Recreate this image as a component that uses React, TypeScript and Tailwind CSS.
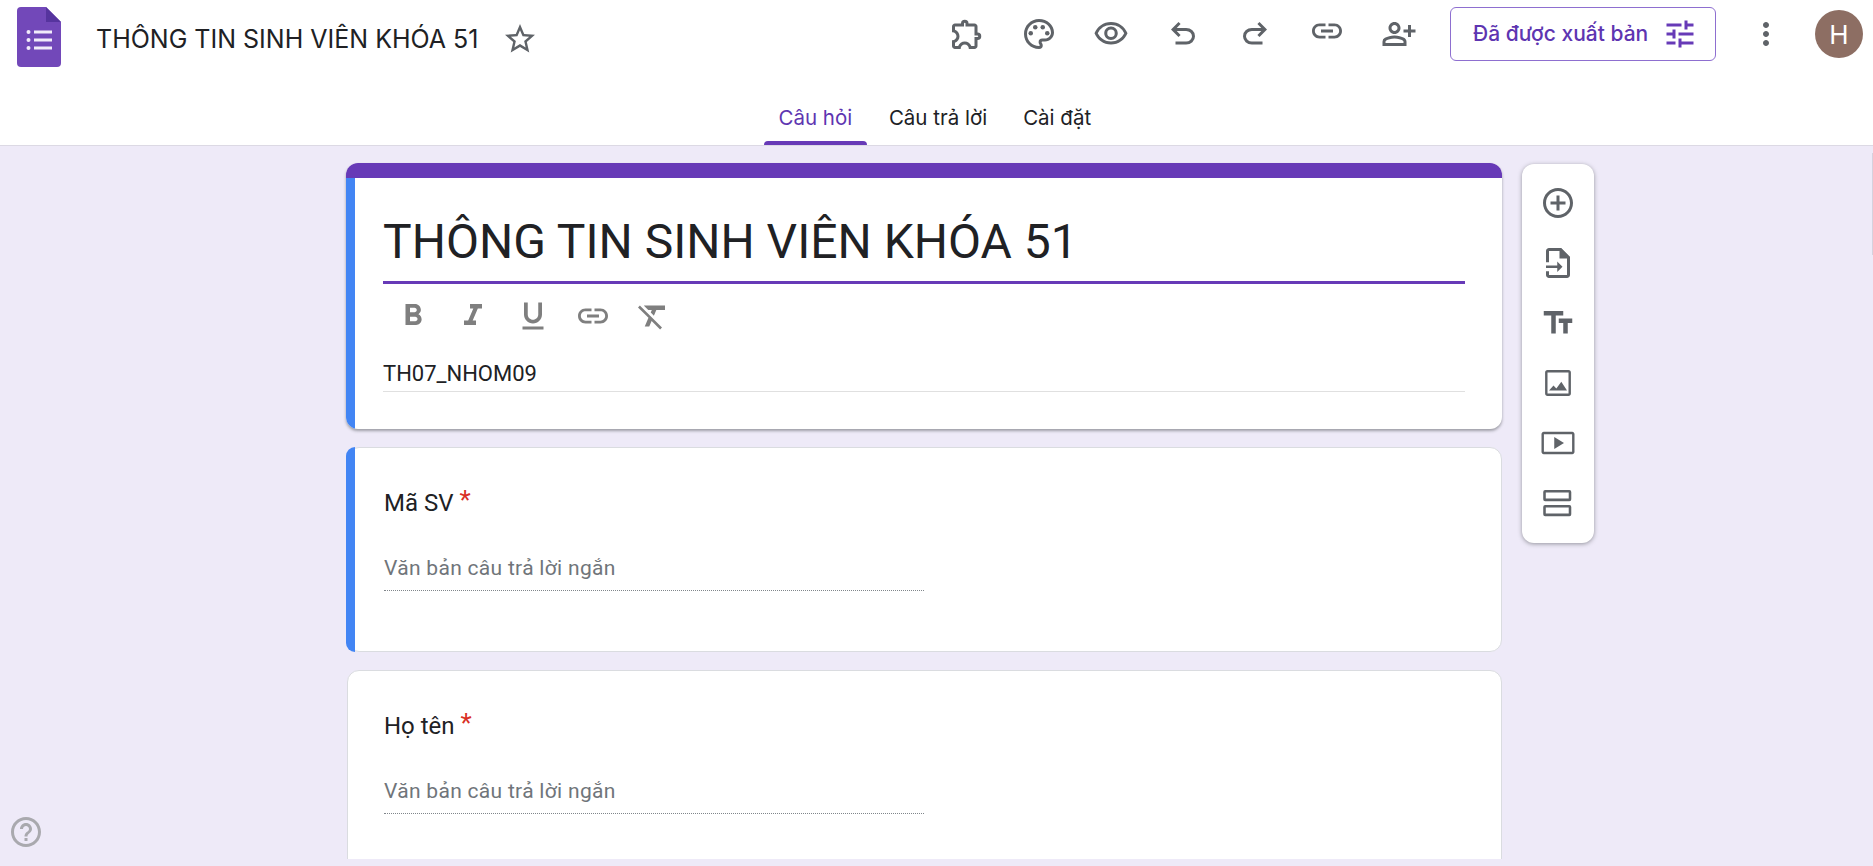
import {
  MdAddCircleOutline,
  MdFormatBold,
  MdFormatClear,
  MdFormatItalic,
  MdFormatUnderlined,
  MdHelpOutline,
  MdLink,
  MdMoreVert,
  MdOutlineExtension,
  MdOutlinePalette,
  MdOutlinePersonAddAlt,
  MdOutlineVisibility,
  MdStarBorder,
  MdTextFields,
  MdTune,
} from "react-icons/md";

function FormsLogo() {
  return (
    <svg width="44" height="60" viewBox="0 0 44 60" className="mt-1.5 shrink-0">
      <path d="M4 0H29L44 15V56a4 4 0 0 1-4 4H4a4 4 0 0 1-4-4V4a4 4 0 0 1 4-4z" fill="#7248b9" />
      <path d="M29 0L44 15H29z" fill="#56349e" />
      <g fill="#f1ebfa">
        <circle cx="11.500" cy="25" r="2" />
        <circle cx="11.500" cy="33" r="2" />
        <circle cx="11.500" cy="41" r="2" />
        <rect x="17" y="23.500" width="18" height="3" />
        <rect x="17" y="31.500" width="18" height="3" />
        <rect x="17" y="39.500" width="18" height="3" />
      </g>
    </svg>
  );
}

function UndoIcon() {
  return (
    <svg width="36" height="36" viewBox="0 -960 960 960" fill="currentColor">
      <path d="M280-200v-80h284q63 0 109.500-40T720-420q0-60-46.500-100T564-560H312l104 104-56 56-200-200 200-200 56 56-104 104h252q97 0 166.500 63T800-420q0 94-69.500 157T564-200H280Z" />
    </svg>
  );
}

function RedoIcon() {
  return (
    <svg width="36" height="36" viewBox="0 -960 960 960" fill="currentColor">
      <path d="M396-200q-97 0-166.500-63T160-420q0-94 69.500-157T396-640h252L544-744l56-56 200 200-200 200-56-56 104-104H396q-63 0-109.500 40T240-420q0 60 46.500 100T396-280h284v80H396Z" />
    </svg>
  );
}

function ImportIcon() {
  return (
    <svg width="36" height="36" viewBox="0 0 24 24" fill="currentColor">
      <path d="M14 2H6c-1.100 0-2 .9-2 2v7.500h2V4h7v5h5v11H6v-2.500H4V20c0 1.100.9 2 2 2h12c1.100 0 2-.9 2-2V8l-6-6z" />
      <path d="M14 2l6 6h-6z" />
      <path d="M11.500 11l3.500 3.500-3.500 3.500v-2.700H4v-1.600h7.500z" />
    </svg>
  );
}

function ImageIcon() {
  return (
    <svg width="36" height="36" viewBox="0 0 24 24" fill="currentColor">
      <path d="M19 5v14H5V5h14m0-1.600H5C4 3.400 3.400 4 3.400 5v14c0 1 .6 1.600 1.600 1.600h14c1 0 1.600-.6 1.600-1.600V5c0-1-.6-1.600-1.600-1.600z" />
      <path d="M6 17l3-3.400 1.900 2 3.300-4.400L18 17z" />
    </svg>
  );
}

function VideoIcon() {
  return (
    <svg width="36" height="36" viewBox="0 0 24 24" fill="currentColor">
      <path d="M21.500 4.500h-19c-.8 0-1.500.7-1.500 1.500v12c0 .8.7 1.500 1.500 1.500h19c.8 0 1.500-.7 1.500-1.500V6c0-.8-.7-1.500-1.500-1.500zm-.1 13.400H2.600V6.100h18.800v11.800z" />
      <path d="M9.500 8v8l6.500-4z" />
    </svg>
  );
}

function SectionIcon() {
  return (
    <svg width="36" height="36" viewBox="0 0 24 24" fill="none" stroke="currentColor" strokeWidth="1.700">
      <rect x="3" y="4.200" width="17" height="5.700" rx="0.400" />
      <rect x="3" y="14.200" width="17" height="5.700" rx="0.400" />
    </svg>
  );
}

function QuestionCard({ label, active }: { label: string; active?: boolean }) {
  return (
    <div className="relative h-[205px] shrink-0 rounded-xl border border-[#dadce0] bg-white pl-9 pt-[33px]">
      {active && <div className="absolute -bottom-px -left-0.5 -top-px w-[9px] rounded-l-xl bg-[#4285f4]" />}
      <div className="flex h-11 items-center text-[24px] text-[#202124]">
        {label}
        <span className="ml-1.5 -mt-1.5 text-[26px] text-[#d93025]">*</span>
      </div>
      <div className="mt-7 flex h-[31px] w-[540px] items-center text-[21px] tracking-[0.3px] text-[#70757a]">
        Văn bản câu trả lời ngắn
      </div>
      <div className="mt-1.5 w-[540px] border-b border-dotted border-[#80868b]" />
    </div>
  );
}

export default function App() {
  const sideTools = [
    <MdAddCircleOutline key="add" size={36} />,
    <ImportIcon key="import" />,
    <MdTextFields key="text" size={36} />,
    <ImageIcon key="image" />,
    <VideoIcon key="video" />,
    <SectionIcon key="section" />,
  ];
  const topTools = [
    <MdOutlineExtension key="ext" />,
    <MdOutlinePalette key="palette" />,
    <MdOutlineVisibility key="eye" />,
    <UndoIcon key="undo" />,
    <RedoIcon key="redo" />,
    <MdLink key="link" className="-mt-1.5" />,
    <MdOutlinePersonAddAlt key="person" />,
  ];
  const editTools = [
    <MdFormatBold key="b" />,
    <MdFormatItalic key="i" />,
    <MdFormatUnderlined key="u" />,
    <MdLink key="l" />,
    <MdFormatClear key="c" />,
  ];

  return (
    <div className="relative flex h-screen flex-col overflow-hidden bg-[#eeeaf8] font-['Roboto',sans-serif]">
      <header className="h-[146px] shrink-0 border-b border-[#dcd9e4] bg-white">
        <div className="flex h-[68px] items-center pl-[17px] pr-[10px] font-['Inter',sans-serif]">
          <FormsLogo />
          <span className="ml-[35px] mt-3 text-[25px] text-[#202124]">THÔNG TIN SINH VIÊN KHÓA 51</span>
          <MdStarBorder className="ml-6 mt-2.5 text-[#5f6368]" size={36} />
          <div className="ml-auto flex items-center text-[36px] text-[#5f6368]">
            {topTools.map((t, i) => (
              <div key={i} className="flex w-[72px] justify-center">
                {t}
              </div>
            ))}
          </div>
          <button className="ml-[15px] flex h-[54px] w-[266px] items-center rounded-md border border-[#8e6fd0] pl-[22px] text-[21px] font-medium text-[#5e35b1]">
            Đã được xuất bản
            <MdTune className="ml-3.5 text-[#673ab7]" size={36} />
          </button>
          <MdMoreVert className="ml-8 text-[#5f6368]" size={36} />
          <div className="ml-[31px] flex h-12 w-12 items-center justify-center rounded-full bg-[#8d6e63] text-[26px] text-white">
            H
          </div>
        </div>
        <nav className="flex h-[77px] justify-center pr-[18px] font-['Inter',sans-serif] text-[20.500px] text-[#202124]">
          <div className="relative flex w-[103px] items-center justify-center pt-6 text-[#5e35b1]">
            Câu hỏi
            <div className="absolute inset-x-0 bottom-0 h-1 rounded-t bg-[#673ab7]" />
          </div>
          <div className="ml-[22px] flex items-center pt-6">Câu trả lời</div>
          <div className="ml-9 flex items-center pt-6">Cài đặt</div>
        </nav>
      </header>

      <main className="flex h-[713px] shrink-0 items-start gap-5 overflow-hidden pl-[347px] pt-[17px]">
        <div className="flex w-[1155px] shrink-0 flex-col gap-[18px]">
          <div className="-ml-px h-[266px] shrink-0 overflow-hidden rounded-xl bg-white shadow-[0_2px_3px_rgba(60,64,67,0.45)]">
            <div className="h-[15px] bg-[#673ab7]" />
            <div className="flex h-[251px]">
              <div className="w-[9px] shrink-0 bg-[#4285f4]" />
              <div className="min-w-0 flex-1 pl-7 pr-[37px]">
                <div className="flex h-[106px] items-end border-b-[3px] border-[#673ab7] pb-[7px] text-[48px] leading-[64px] text-[#202124]">
                  THÔNG TIN SINH VIÊN KHÓA 51
                </div>
                <div className="mt-0.5 flex h-[60px] items-center text-[36px] text-[#7f7f7f]">
                  {editTools.map((t, i) => (
                    <div key={i} className="flex w-[60px] justify-center">
                      {t}
                    </div>
                  ))}
                </div>
                <div className="mt-[15px] flex h-[31px] items-center border-b border-[#e0e0e0] pb-1.5 text-[22px] text-[#202124]">
                  TH07_NHOM09
                </div>
              </div>
            </div>
          </div>
          <QuestionCard label="Mã SV" active />
          <QuestionCard label="Họ tên" />
        </div>

        <aside className="mt-px flex w-[72px] shrink-0 flex-col items-center rounded-xl bg-white pb-2.5 pt-[9px] text-[#5f6368] shadow-[0_1px_4px_rgba(60,64,67,0.5)]">
          {sideTools.map((t, i) => (
            <div key={i} className="flex h-[60px] items-center justify-center">
              {t}
            </div>
          ))}
        </aside>
      </main>

      <div className="absolute right-0 top-[153px] h-[102px] w-px bg-[#d5d2de]" />
      <MdHelpOutline className="absolute bottom-[16px] left-2 text-[#a9a9ae]" size={36} />
    </div>
  );
}
